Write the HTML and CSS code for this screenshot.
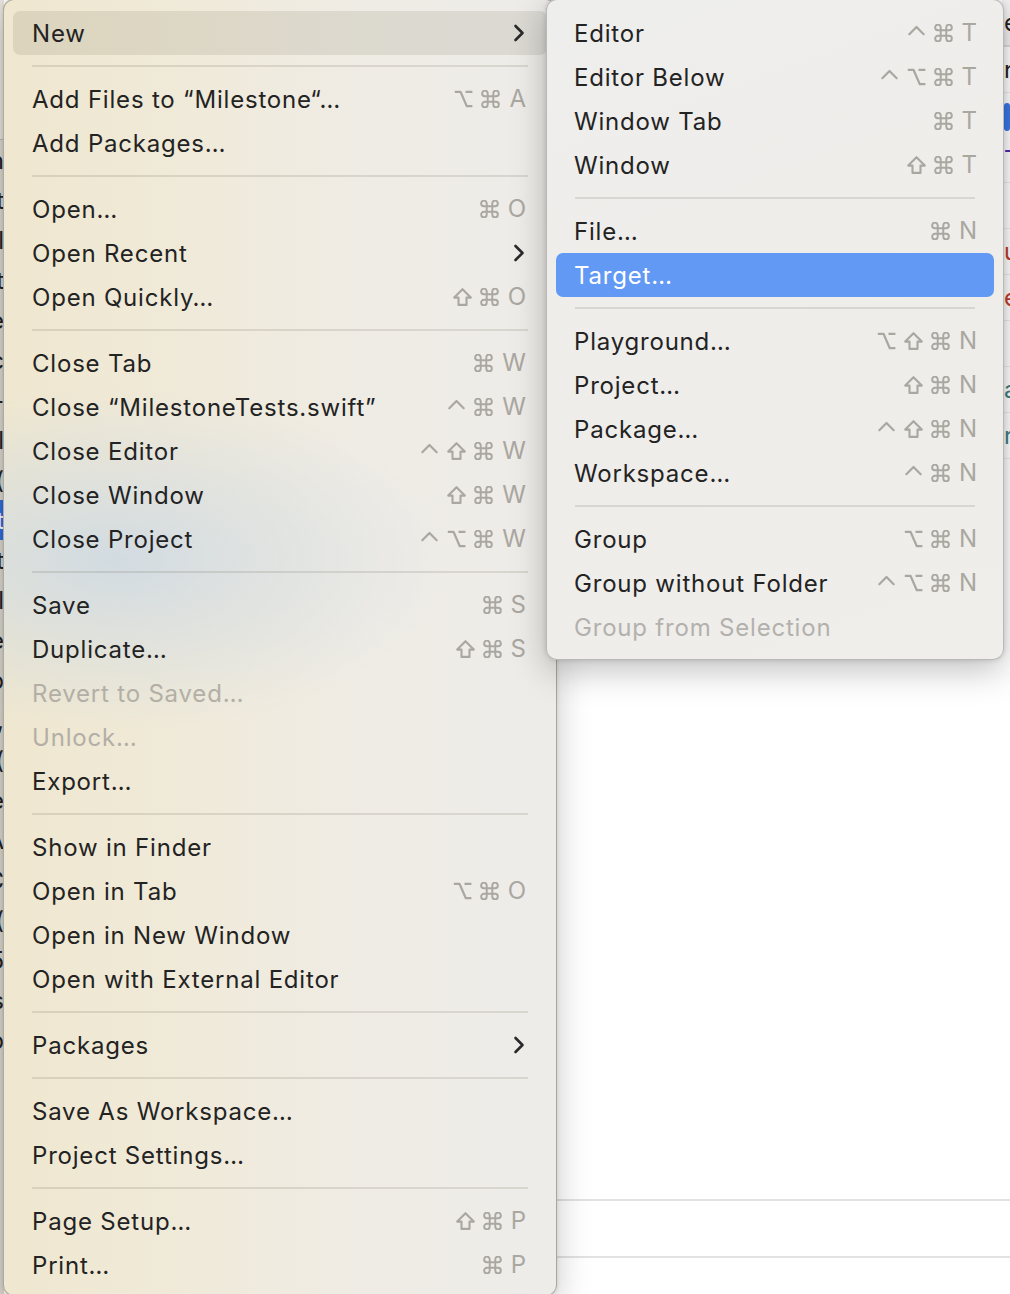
FILE: index.html
```html
<!DOCTYPE html>
<html lang="en">
<head>
<meta charset="utf-8">
<title>File menu</title>
<link rel="stylesheet" href="styles.css">
</head>
<body>
<svg class="sprite" aria-hidden="true">
  <symbol id="ctrl" viewBox="0 0 19 18"><path d="M2.3 10.2 9.5 3 16.7 10.2" fill="none" stroke="currentColor" stroke-width="2.2" stroke-linecap="round" stroke-linejoin="round"/></symbol>
  <symbol id="opt" viewBox="0 0 19 18"><path d="M0.8 1.8H6.5L12.8 16.2H18.4M11.5 1.8H18.4" fill="none" stroke="currentColor" stroke-width="2.2" stroke-linejoin="round"/></symbol>
  <symbol id="shift" viewBox="0 0 19 18"><path d="M9.5 1.2 17.8 9.6H13.5V16.9H5.5V9.6H1.2Z" fill="none" stroke="currentColor" stroke-width="2.1" stroke-linejoin="round"/></symbol>
  <symbol id="cmd" viewBox="-0.7 -0.7 19.4 19.4"><path d="M6 6V3A3 3 0 1 0 3 6H15A3 3 0 1 0 12 3V15A3 3 0 1 0 15 12H3A3 3 0 1 0 6 15Z" fill="none" stroke="currentColor" stroke-width="2.1"/></symbol>
  <symbol id="chev" viewBox="0 0 12 18"><path d="M2.5 2 9.5 9 2.5 16" fill="none" stroke="currentColor" stroke-width="2.6" stroke-linecap="round" stroke-linejoin="round"/></symbol>
</svg>

<div class="screen">
  <div class="backdrop">
    <div class="left-strip">
      <div class="ls-top"></div>
      <div class="ls-line">ch</div>
      <div class="ls-line">at</div>
      <div class="ls-line">il</div>
      <div class="ls-line">st</div>
      <div class="ls-line">le</div>
      <div class="ls-line">ec</div>
      <div class="ls-line">--</div>
      <div class="ls-line">il</div>
      <div class="ls-line">e(</div>
      <div class="ls-line sel">st</div>
      <div class="ls-line">at</div>
      <div class="ls-line">il</div>
      <div class="ls-line">le</div>
      <div class="ls-line">ip</div>
      <div class="ls-line">a,</div>
      <div class="ls-line">e(</div>
      <div class="ls-line">de</div>
      <div class="ls-line">eA</div>
      <div class="ls-line">aC</div>
      <div class="ls-line">a(</div>
      <div class="ls-line">e5</div>
      <div class="ls-line">es</div>
      <div class="ls-line">ep</div>
    </div>
    <div class="doc"></div>
    <div class="right-strip">
      <div class="rs-head">e</div>
      <div class="rs-line">n</div>
      <div class="rs-chip"></div>
      <div class="rs-line purple">T</div>
      <div class="rs-line"></div>
      <div class="rs-line red">u</div>
      <div class="rs-line red">e</div>
      <div class="rs-line"></div>
      <div class="rs-line teal">a</div>
      <div class="rs-line teal">r</div>
    </div>
  </div>

  <div class="menu main">
    <div class="item active"><span class="label">New</span><svg class="chev"><use href="#chev"/></svg></div>
    <div class="sep"><i></i></div>
    <div class="item"><span class="label">Add Files to “Milestone“…</span><span class="keys"><svg class="k"><use href="#opt"/></svg><svg class="k"><use href="#cmd"/></svg><span class="kl">A</span></span></div>
    <div class="item"><span class="label">Add Packages…</span></div>
    <div class="sep"><i></i></div>
    <div class="item"><span class="label">Open…</span><span class="keys"><svg class="k"><use href="#cmd"/></svg><span class="kl">O</span></span></div>
    <div class="item"><span class="label">Open Recent</span><svg class="chev"><use href="#chev"/></svg></div>
    <div class="item"><span class="label">Open Quickly…</span><span class="keys"><svg class="k"><use href="#shift"/></svg><svg class="k"><use href="#cmd"/></svg><span class="kl">O</span></span></div>
    <div class="sep"><i></i></div>
    <div class="item"><span class="label">Close Tab</span><span class="keys"><svg class="k"><use href="#cmd"/></svg><span class="kl">W</span></span></div>
    <div class="item"><span class="label">Close “MilestoneTests.swift”</span><span class="keys"><svg class="k"><use href="#ctrl"/></svg><svg class="k"><use href="#cmd"/></svg><span class="kl">W</span></span></div>
    <div class="item"><span class="label">Close Editor</span><span class="keys"><svg class="k"><use href="#ctrl"/></svg><svg class="k"><use href="#shift"/></svg><svg class="k"><use href="#cmd"/></svg><span class="kl">W</span></span></div>
    <div class="item"><span class="label">Close Window</span><span class="keys"><svg class="k"><use href="#shift"/></svg><svg class="k"><use href="#cmd"/></svg><span class="kl">W</span></span></div>
    <div class="item"><span class="label">Close Project</span><span class="keys"><svg class="k"><use href="#ctrl"/></svg><svg class="k"><use href="#opt"/></svg><svg class="k"><use href="#cmd"/></svg><span class="kl">W</span></span></div>
    <div class="sep"><i></i></div>
    <div class="item"><span class="label">Save</span><span class="keys"><svg class="k"><use href="#cmd"/></svg><span class="kl">S</span></span></div>
    <div class="item"><span class="label">Duplicate…</span><span class="keys"><svg class="k"><use href="#shift"/></svg><svg class="k"><use href="#cmd"/></svg><span class="kl">S</span></span></div>
    <div class="item disabled"><span class="label">Revert to Saved…</span></div>
    <div class="item disabled"><span class="label">Unlock…</span></div>
    <div class="item"><span class="label">Export…</span></div>
    <div class="sep"><i></i></div>
    <div class="item"><span class="label">Show in Finder</span></div>
    <div class="item"><span class="label">Open in Tab</span><span class="keys"><svg class="k"><use href="#opt"/></svg><svg class="k"><use href="#cmd"/></svg><span class="kl">O</span></span></div>
    <div class="item"><span class="label">Open in New Window</span></div>
    <div class="item"><span class="label">Open with External Editor</span></div>
    <div class="sep"><i></i></div>
    <div class="item"><span class="label">Packages</span><svg class="chev"><use href="#chev"/></svg></div>
    <div class="sep"><i></i></div>
    <div class="item"><span class="label">Save As Workspace…</span></div>
    <div class="item"><span class="label">Project Settings…</span></div>
    <div class="sep"><i></i></div>
    <div class="item"><span class="label">Page Setup…</span><span class="keys"><svg class="k"><use href="#shift"/></svg><svg class="k"><use href="#cmd"/></svg><span class="kl">P</span></span></div>
    <div class="item"><span class="label">Print…</span><span class="keys"><svg class="k"><use href="#cmd"/></svg><span class="kl">P</span></span></div>
  </div>

  <div class="menu sub">
    <div class="item"><span class="label">Editor</span><span class="keys"><svg class="k"><use href="#ctrl"/></svg><svg class="k"><use href="#cmd"/></svg><span class="kl">T</span></span></div>
    <div class="item"><span class="label">Editor Below</span><span class="keys"><svg class="k"><use href="#ctrl"/></svg><svg class="k"><use href="#opt"/></svg><svg class="k"><use href="#cmd"/></svg><span class="kl">T</span></span></div>
    <div class="item"><span class="label">Window Tab</span><span class="keys"><svg class="k"><use href="#cmd"/></svg><span class="kl">T</span></span></div>
    <div class="item"><span class="label">Window</span><span class="keys"><svg class="k"><use href="#shift"/></svg><svg class="k"><use href="#cmd"/></svg><span class="kl">T</span></span></div>
    <div class="sep"><i></i></div>
    <div class="item"><span class="label">File…</span><span class="keys"><svg class="k"><use href="#cmd"/></svg><span class="kl">N</span></span></div>
    <div class="item selected"><span class="label">Target…</span></div>
    <div class="sep"><i></i></div>
    <div class="item"><span class="label">Playground…</span><span class="keys"><svg class="k"><use href="#opt"/></svg><svg class="k"><use href="#shift"/></svg><svg class="k"><use href="#cmd"/></svg><span class="kl">N</span></span></div>
    <div class="item"><span class="label">Project…</span><span class="keys"><svg class="k"><use href="#shift"/></svg><svg class="k"><use href="#cmd"/></svg><span class="kl">N</span></span></div>
    <div class="item"><span class="label">Package…</span><span class="keys"><svg class="k"><use href="#ctrl"/></svg><svg class="k"><use href="#shift"/></svg><svg class="k"><use href="#cmd"/></svg><span class="kl">N</span></span></div>
    <div class="item"><span class="label">Workspace…</span><span class="keys"><svg class="k"><use href="#ctrl"/></svg><svg class="k"><use href="#cmd"/></svg><span class="kl">N</span></span></div>
    <div class="sep"><i></i></div>
    <div class="item"><span class="label">Group</span><span class="keys"><svg class="k"><use href="#opt"/></svg><svg class="k"><use href="#cmd"/></svg><span class="kl">N</span></span></div>
    <div class="item"><span class="label">Group without Folder</span><span class="keys"><svg class="k"><use href="#ctrl"/></svg><svg class="k"><use href="#opt"/></svg><svg class="k"><use href="#cmd"/></svg><span class="kl">N</span></span></div>
    <div class="item disabled"><span class="label">Group from Selection</span></div>
  </div>
</div>
</body>
</html>
```

FILE: styles.css
```css
* { box-sizing: border-box; }

body {
  margin: 0;
  font-family: Inter, "Noto Sans", sans-serif;
  background: #fff;
}

.sprite { position: absolute; width: 0; height: 0; overflow: hidden; }

.screen {
  position: relative;
  width: 1010px;
  height: 1294px;
  overflow: hidden;
  background: #fff;
}

/* ---------- window behind the menus ---------- */
.backdrop {
  display: grid;
  grid-template-columns: 4px 1fr 8px;
  height: 100%;
}

.left-strip {
  background: #dcd8cc;
  overflow: hidden;
  display: flex;
  flex-direction: column;
  font-size: 24px;
  color: #222;
}
.ls-top { height: 140px; flex: none; background: #e6e3dc; border-bottom: 1px solid #bdb9b0; }
.ls-line {
  height: 40px;
  flex: none;
  display: flex;
  justify-content: flex-end;
  align-items: center;
  white-space: nowrap;
}
.ls-line.sel { background: #2f6fe0; color: #fff; }

.doc {
  background:
    linear-gradient(#e2e2e2, #e2e2e2) 0 1199px / 100% 2px no-repeat,
    linear-gradient(#e2e2e2, #e2e2e2) 0 1256px / 100% 2px no-repeat,
    #fff;
}

.right-strip {
  overflow: hidden;
  display: flex;
  flex-direction: column;
  font-size: 24px;
  color: #222;
  background:
    linear-gradient(#e2e2e2, #e2e2e2) 0 1199px / 100% 2px no-repeat,
    linear-gradient(#e2e2e2, #e2e2e2) 0 1256px / 100% 2px no-repeat,
    #fff;
}
.rs-head { height: 47px; flex: none; background: #f1f1f1; border-bottom: 2px solid #dcdcdc; display: flex; align-items: center; padding-left: 2px; }
.rs-line { height: 46px; flex: none; display: flex; align-items: center; padding-left: 2px; white-space: nowrap; border-bottom: 1px solid #ececec; }
.rs-chip { height: 28px; margin: 10px 0 6px 2px; flex: none; background: #3a78e6; border-radius: 3px; }
.purple { color: #4a2bb8; }
.red { color: #c0392b; }
.teal { color: #3d7f86; }

/* ---------- menus ---------- */
.menu {
  position: absolute;
  top: -1px;
  display: flex;
  flex-direction: column;
  padding: 11px 9px;
  border-radius: 11px;
  border: 1px solid rgba(0, 0, 0, 0.28);
  color: #232323;
  font-size: 24px;
  letter-spacing: 0.8px;
}

.menu.main {
  left: 3px;
  width: 554px;
  height: 1297px;
  background:
    radial-gradient(ellipse 330px 170px at 110px 560px, rgba(205, 217, 228, 0.85), rgba(205, 217, 228, 0) 100%),
    linear-gradient(to right, #efe7cf 0%, #f0eada 35%, #efece5 65%, #eeece9 100%);
  box-shadow: 0 12px 34px rgba(0, 0, 0, 0.22), 0 0 4px rgba(0, 0, 0, 0.12);
}

.menu.sub {
  left: 546px;
  width: 458px;
  height: 661px;
  background: linear-gradient(160deg, #eeeeec 0%, #efedea 60%, #f0eeea 100%);
  box-shadow: 0 10px 34px rgba(0, 0, 0, 0.25), 0 0 5px rgba(0, 0, 0, 0.15);
  border-color: rgba(0, 0, 0, 0.22);
}

.item {
  height: 44px;
  flex: none;
  display: flex;
  align-items: center;
  justify-content: space-between;
  padding: 0 21px 0 19px;
  border-radius: 7px;
  white-space: nowrap;
}
.sub .item { padding-left: 18px; padding-right: 17px; }

.item.active { background: rgba(70, 60, 40, 0.11); }
.item.selected { background: #6199f4; color: #fff; }
.item.disabled { color: #b3afa6; }
.sub .item.disabled { color: #b3b1ad; }

.sep {
  height: 22px;
  flex: none;
  display: flex;
  align-items: center;
  padding: 0 19px;
}
.sep i {
  display: block;
  width: 100%;
  height: 2px;
  background: rgba(60, 50, 30, 0.12);
}

.keys {
  display: flex;
  align-items: center;
  gap: 8px;
  height: 18px;
  color: #aaa7a1;
  letter-spacing: 0;
}
.k { width: 19px; height: 18px; flex: none; }
.kl { font-size: 24px; line-height: 18px; margin-left: 1px; }

.chev { width: 12px; height: 18px; color: #2a2a2a; margin-right: 1px; }
```
